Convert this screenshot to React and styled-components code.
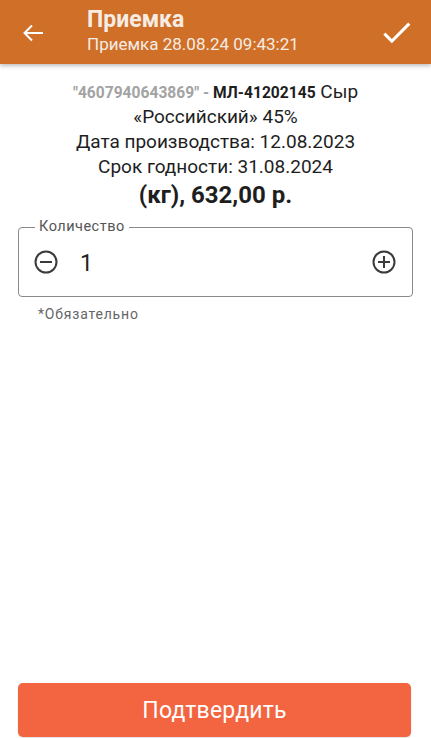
import React from "react";
import styled, { createGlobalStyle } from "styled-components";

const Global = createGlobalStyle`
  html, body { margin: 0; padding: 0; background: #fff; }
  body { font-family: Roboto, "Noto Sans", sans-serif; }
  * { box-sizing: border-box; }
`;

const Page = styled.div`
  display: flex;
  flex-direction: column;
  min-height: 100vh;
  background: #fff;
`;

const Header = styled.header`
  height: 64px;
  background: #cf6f28;
  display: flex;
  align-items: center;
  padding: 0 16px 0 21px;
  box-shadow: 0 2px 4px rgba(0, 0, 0, 0.25);
  color: #fff;
  position: relative;
  z-index: 1;
`;

const BackIcon = styled.div`
  width: 24px;
  height: 24px;
  display: flex;
  align-items: center;
  justify-content: center;
  margin-top: 2px;
`;

const CheckIcon = styled.div`
  width: 37px;
  height: 37px;
  display: flex;
  align-items: center;
  justify-content: center;
`;

const Titles = styled.div`
  flex: 1;
  display: flex;
  flex-direction: column;
  margin-left: 42px;
  margin-top: -3px;
`;

const Title = styled.div`
  font-size: 23px;
  font-weight: 700;
  line-height: 27px;
  color: #f6ece4;
`;

const Subtitle = styled.div`
  font-size: 17px;
  line-height: 22px;
  color: #f6ece4;
`;

const Content = styled.main`
  flex: 1;
  display: flex;
  flex-direction: column;
  padding: 15px 18px 0 18px;
`;

const Info = styled.div`
  text-align: center;
  font-size: 19px;
  line-height: 25px;
  color: #1e1e1e;
  padding: 0 40px;
`;

const FirstLine = styled.div`
  line-height: 25px;
`;

const Code = styled.span`
  color: #a3a3a3;
  font-weight: 700;
  font-size: 15.6px;
  line-height: 18px;
`;

const Article = styled.span`
  font-weight: 700;
  font-size: 15.6px;
  line-height: 18px;
`;

const Price = styled.div`
  font-size: 24px;
  font-weight: 700;
  line-height: 30px;
  margin-top: 1px;
`;

const Field = styled.div`
  position: relative;
  margin-top: 17px;
  height: 70px;
  border: 1px solid #8a8a8a;
  border-radius: 4px;
  display: flex;
  align-items: center;
  padding: 0 16px 0 15px;
`;

const FieldLabel = styled.span`
  position: absolute;
  top: -10px;
  left: 16px;
  padding: 0 4px;
  background: #fff;
  font-size: 14.5px;
  line-height: 18px;
  color: #555;
  letter-spacing: 0.5px;
`;

const Value = styled.div`
  flex: 1;
  font-size: 23px;
  color: #222;
  margin-left: 22px;
  margin-top: 2px;
`;

const Helper = styled.div`
  font-size: 14px;
  line-height: 18px;
  color: #666;
  margin: 8px 0 0 20px;
  letter-spacing: 0.8px;
`;

const Spacer = styled.div`
  flex: 1;
`;

const ConfirmButton = styled.button`
  height: 54px;
  margin: 0 20px 1px 18px;
  border: none;
  border-radius: 5px;
  background: #f36440;
  color: #fff;
  font-family: Roboto, sans-serif;
  font-size: 23px;
  letter-spacing: 0.2px;
  box-shadow: 0 1px 2px rgba(0,0,0,0.15);
`;

const CircleIcon = ({ plus }) => (
  <svg width="24" height="24" viewBox="0 0 24 24" fill="none" stroke="#3a3a3a" strokeWidth="2" strokeLinecap="butt">
    <circle cx="12" cy="12" r="10.5" />
    <line x1="6" y1="12" x2="18" y2="12" />
    {plus && <line x1="12" y1="6" x2="12" y2="18" />}
  </svg>
);

export default function App() {
  return (
    <Page>
      <Global />
      <Header>
        <BackIcon>
          <svg width="22" height="20" viewBox="0 0 22 20" fill="none" stroke="#fff" strokeWidth="2">
            <path d="M2.5 10H21" />
            <path d="M10 2.5L2.5 10l7.5 7.5" />
          </svg>
        </BackIcon>
        <Titles>
          <Title>Приемка</Title>
          <Subtitle>Приемка 28.08.24 09:43:21</Subtitle>
        </Titles>
        <CheckIcon>
          <svg width="37" height="37" viewBox="0 0 24 24" fill="#fff">
            <path d="M9 16.17L4.83 12l-1.42 1.41L9 19 21 7l-1.41-1.41z" />
          </svg>
        </CheckIcon>
      </Header>
      <Content>
        <Info>
          <FirstLine>
            <Code>"4607940643869" - </Code>
            <Article>МЛ-41202145</Article> Сыр «Российский» 45%
          </FirstLine>
          Дата производства: 12.08.2023
          <br />
          Срок годности: 31.08.2024
          <Price>(кг), 632,00 р.</Price>
        </Info>
        <Field>
          <FieldLabel>Количество</FieldLabel>
          <CircleIcon />
          <Value>1</Value>
          <CircleIcon plus />
        </Field>
        <Helper>*Обязательно</Helper>
        <Spacer />
      </Content>
      <ConfirmButton>Подтвердить</ConfirmButton>
    </Page>
  );
}
